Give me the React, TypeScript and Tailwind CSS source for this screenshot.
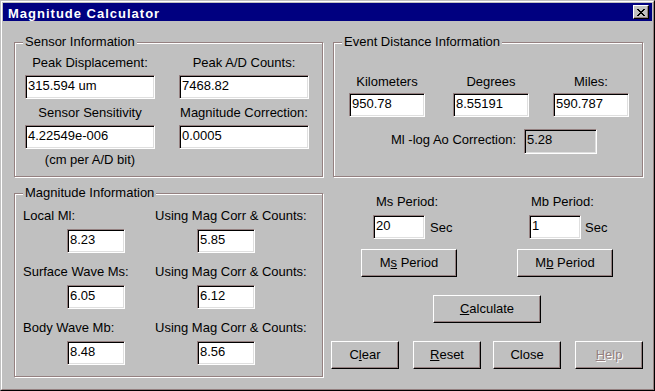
import React from 'react';

const SHADOW = '#948080';

function GroupBox({ title, className = '', children }: { title: string; className?: string; children: React.ReactNode }) {
  return (
    <div
      className={`relative border border-[#948080] shadow-[1px_1px_0_#fff,inset_1px_1px_0_#fff] ${className}`}
    >
      <span className="absolute left-[8px] top-[-9px] bg-[#c0c0c0] px-[2px] leading-[15px]">{title}</span>
      {children}
    </div>
  );
}

function Field({ value, className = '', disabled }: { value: string; className?: string; disabled?: boolean }) {
  return (
    <div
      className={`border border-t-[#948080] border-l-[#948080] border-b-white border-r-white shadow-[inset_1px_1px_0_#000,inset_-1px_-1px_0_#dfdfdf] pl-[2px] leading-[20px] whitespace-nowrap ${
        disabled ? 'bg-[#c0c0c0] h-[25px]' : 'bg-white h-[24px]'
      } ${className}`}
    >
      {value}
    </div>
  );
}

function Btn({ children, className = '', disabled }: { children: React.ReactNode; className?: string; disabled?: boolean }) {
  return (
    <button
      className={`h-[28px] border border-t-white border-l-white border-b-black border-r-black shadow-[inset_-1px_-1px_0_#948080] bg-[#c0c0c0] leading-[15px] pb-[2px] ${
        disabled ? 'text-[#948080] [text-shadow:1px_1px_0_#fff]' : 'text-black'
      } ${className}`}
    >
      {children}
    </button>
  );
}

const U = ({ children }: { children: React.ReactNode }) => <u className="underline-offset-1">{children}</u>;

function CloseGlyph() {
  const px: [number, number][] = [
    [0, 0], [1, 0], [6, 0], [7, 0],
    [1, 1], [2, 1], [5, 1], [6, 1],
    [2, 2], [3, 2], [4, 2], [5, 2],
    [3, 3], [4, 3],
    [2, 4], [3, 4], [4, 4], [5, 4],
    [1, 5], [2, 5], [5, 5], [6, 5],
    [0, 6], [1, 6], [6, 6], [7, 6],
  ];
  return (
    <svg width="8" height="7" viewBox="0 0 8 7" shapeRendering="crispEdges">
      {px.map(([x, y]) => (
        <rect key={`${x}-${y}`} x={x} y={y} width="1" height="1" fill="#000" />
      ))}
    </svg>
  );
}

export default function App() {
  return (
    <div className="w-[655px] h-[391px] bg-[#c0c0c0] border border-t-[#c0c0c0] border-l-[#c0c0c0] border-r-black border-b-black font-['Liberation_Sans',Arial,sans-serif] text-[13px] leading-[15px] text-black">
      <div className="h-full border border-t-white border-l-white border-r-[#948080] border-b-[#948080] p-px">
        {/* Title bar */}
        <div className="h-[18px] bg-[#000080] flex items-start justify-between pl-[5px] pr-[3px]">
          <span className="pt-[3px] text-white font-bold tracking-[1px]">Magnitude Calculator</span>
          <div className="self-center w-[16px] h-[14px] bg-[#c0c0c0] border border-t-white border-l-white border-b-black border-r-black shadow-[inset_-1px_-1px_0_#948080] flex items-center justify-center">
            <CloseGlyph />
          </div>
        </div>

        <div className="flex pl-[11px] pt-[21px]">
          {/* Left column */}
          <div className="flex flex-col w-[309px]">
            <GroupBox title="Sensor Information" className="h-[135px]">
              <div className="flex pl-[10px] pt-[12px] gap-[24px]">
                <div className="flex flex-col w-[130px]">
                  <div className="text-center">Peak Displacement:</div>
                  <Field value="315.594 um" className="mt-[5px]" />
                  <div className="text-center mt-[6px]">Sensor Sensitivity</div>
                  <Field value="4.22549e-006" className="mt-[5px]" />
                  <div className="text-center mt-[3px]">(cm per A/D bit)</div>
                </div>
                <div className="flex flex-col w-[130px]">
                  <div className="text-center">Peak A/D Counts:</div>
                  <Field value="7468.82" className="mt-[5px]" />
                  <div className="text-center mt-[6px] whitespace-nowrap">Magnitude Correction:</div>
                  <Field value="0.0005" className="mt-[5px]" />
                </div>
              </div>
            </GroupBox>

            <GroupBox title="Magnitude Information" className="h-[184px] mt-[16px]">
              <div className="grid grid-cols-[132px_1fr] gap-y-[11px] pl-[8px] pt-[14px]">
                {[
                  ['Local Ml:', '8.23', '5.85'],
                  ['Surface Wave Ms:', '6.05', '6.12'],
                  ['Body Wave Mb:', '8.48', '8.56'],
                ].map(([label, a, b]) => (
                  <React.Fragment key={label}>
                    <div className="flex flex-col">
                      <div>{label}</div>
                      <Field value={a} className="mt-[6px] ml-[44px] w-[58px]" />
                    </div>
                    <div className="flex flex-col">
                      <div className="whitespace-nowrap">Using Mag Corr &amp; Counts:</div>
                      <Field value={b} className="mt-[6px] ml-[42px] w-[58px]" />
                    </div>
                  </React.Fragment>
                ))}
              </div>
            </GroupBox>
          </div>

          {/* Right column */}
          <div className="flex flex-col w-[310px] ml-[10px]">
            <GroupBox title="Event Distance Information" className="h-[135px]">
              <div className="flex pl-[15px] pt-[31px]">
                <div className="flex flex-col w-[76px]">
                  <div className="text-center">Kilometers</div>
                  <Field value="950.78" className="mt-[4px]" />
                </div>
                <div className="flex flex-col w-[76px] ml-[28px]">
                  <div className="text-center">Degrees</div>
                  <Field value="8.55191" className="mt-[4px]" />
                </div>
                <div className="flex flex-col w-[76px] ml-[24px]">
                  <div className="text-center">Miles:</div>
                  <Field value="590.787" className="mt-[4px]" />
                </div>
              </div>
              <div className="flex items-start pl-[57px] mt-[12px] gap-[8px]">
                <div className="mt-[3px] whitespace-nowrap">Ml -log Ao Correction:</div>
                <Field value="5.28" disabled className="w-[73px]" />
              </div>
            </GroupBox>

            <div className="flex mt-[17px]">
              <div className="flex flex-col w-[96px] ml-[28px]">
                <div className="pl-[15px]">Ms Period:</div>
                <div className="flex items-start mt-[6px]">
                  <Field value="20" className="ml-[12px] w-[52px]" />
                  <span className="ml-[5px] mt-[5px]">Sec</span>
                </div>
                <Btn className="w-[96px] mt-[10px]">
                  M<U>s</U> Period
                </Btn>
              </div>
              <div className="flex flex-col w-[96px] ml-[60px]">
                <div className="pl-[14px]">Mb Period:</div>
                <div className="flex items-start mt-[6px]">
                  <Field value="1" className="ml-[12px] w-[52px]" />
                  <span className="ml-[4px] mt-[5px]">Sec</span>
                </div>
                <Btn className="w-[96px] mt-[10px]">
                  M<U>b</U> Period
                </Btn>
              </div>
            </div>

            <Btn className="w-[108px] mt-[18px] ml-[100px]">
              <U>C</U>alculate
            </Btn>

            <div className="flex mt-[18px] ml-[-2px]">
              <Btn className="w-[68px]">
                C<U>l</U>ear
              </Btn>
              <Btn className="w-[68px] ml-[14px]">
                <U>R</U>eset
              </Btn>
              <Btn className="w-[68px] ml-[12px]">Close</Btn>
              <Btn className="w-[68px] ml-[14px]" disabled>
                <U>H</U>elp
              </Btn>
            </div>
          </div>
        </div>
      </div>
    </div>
  );
}
